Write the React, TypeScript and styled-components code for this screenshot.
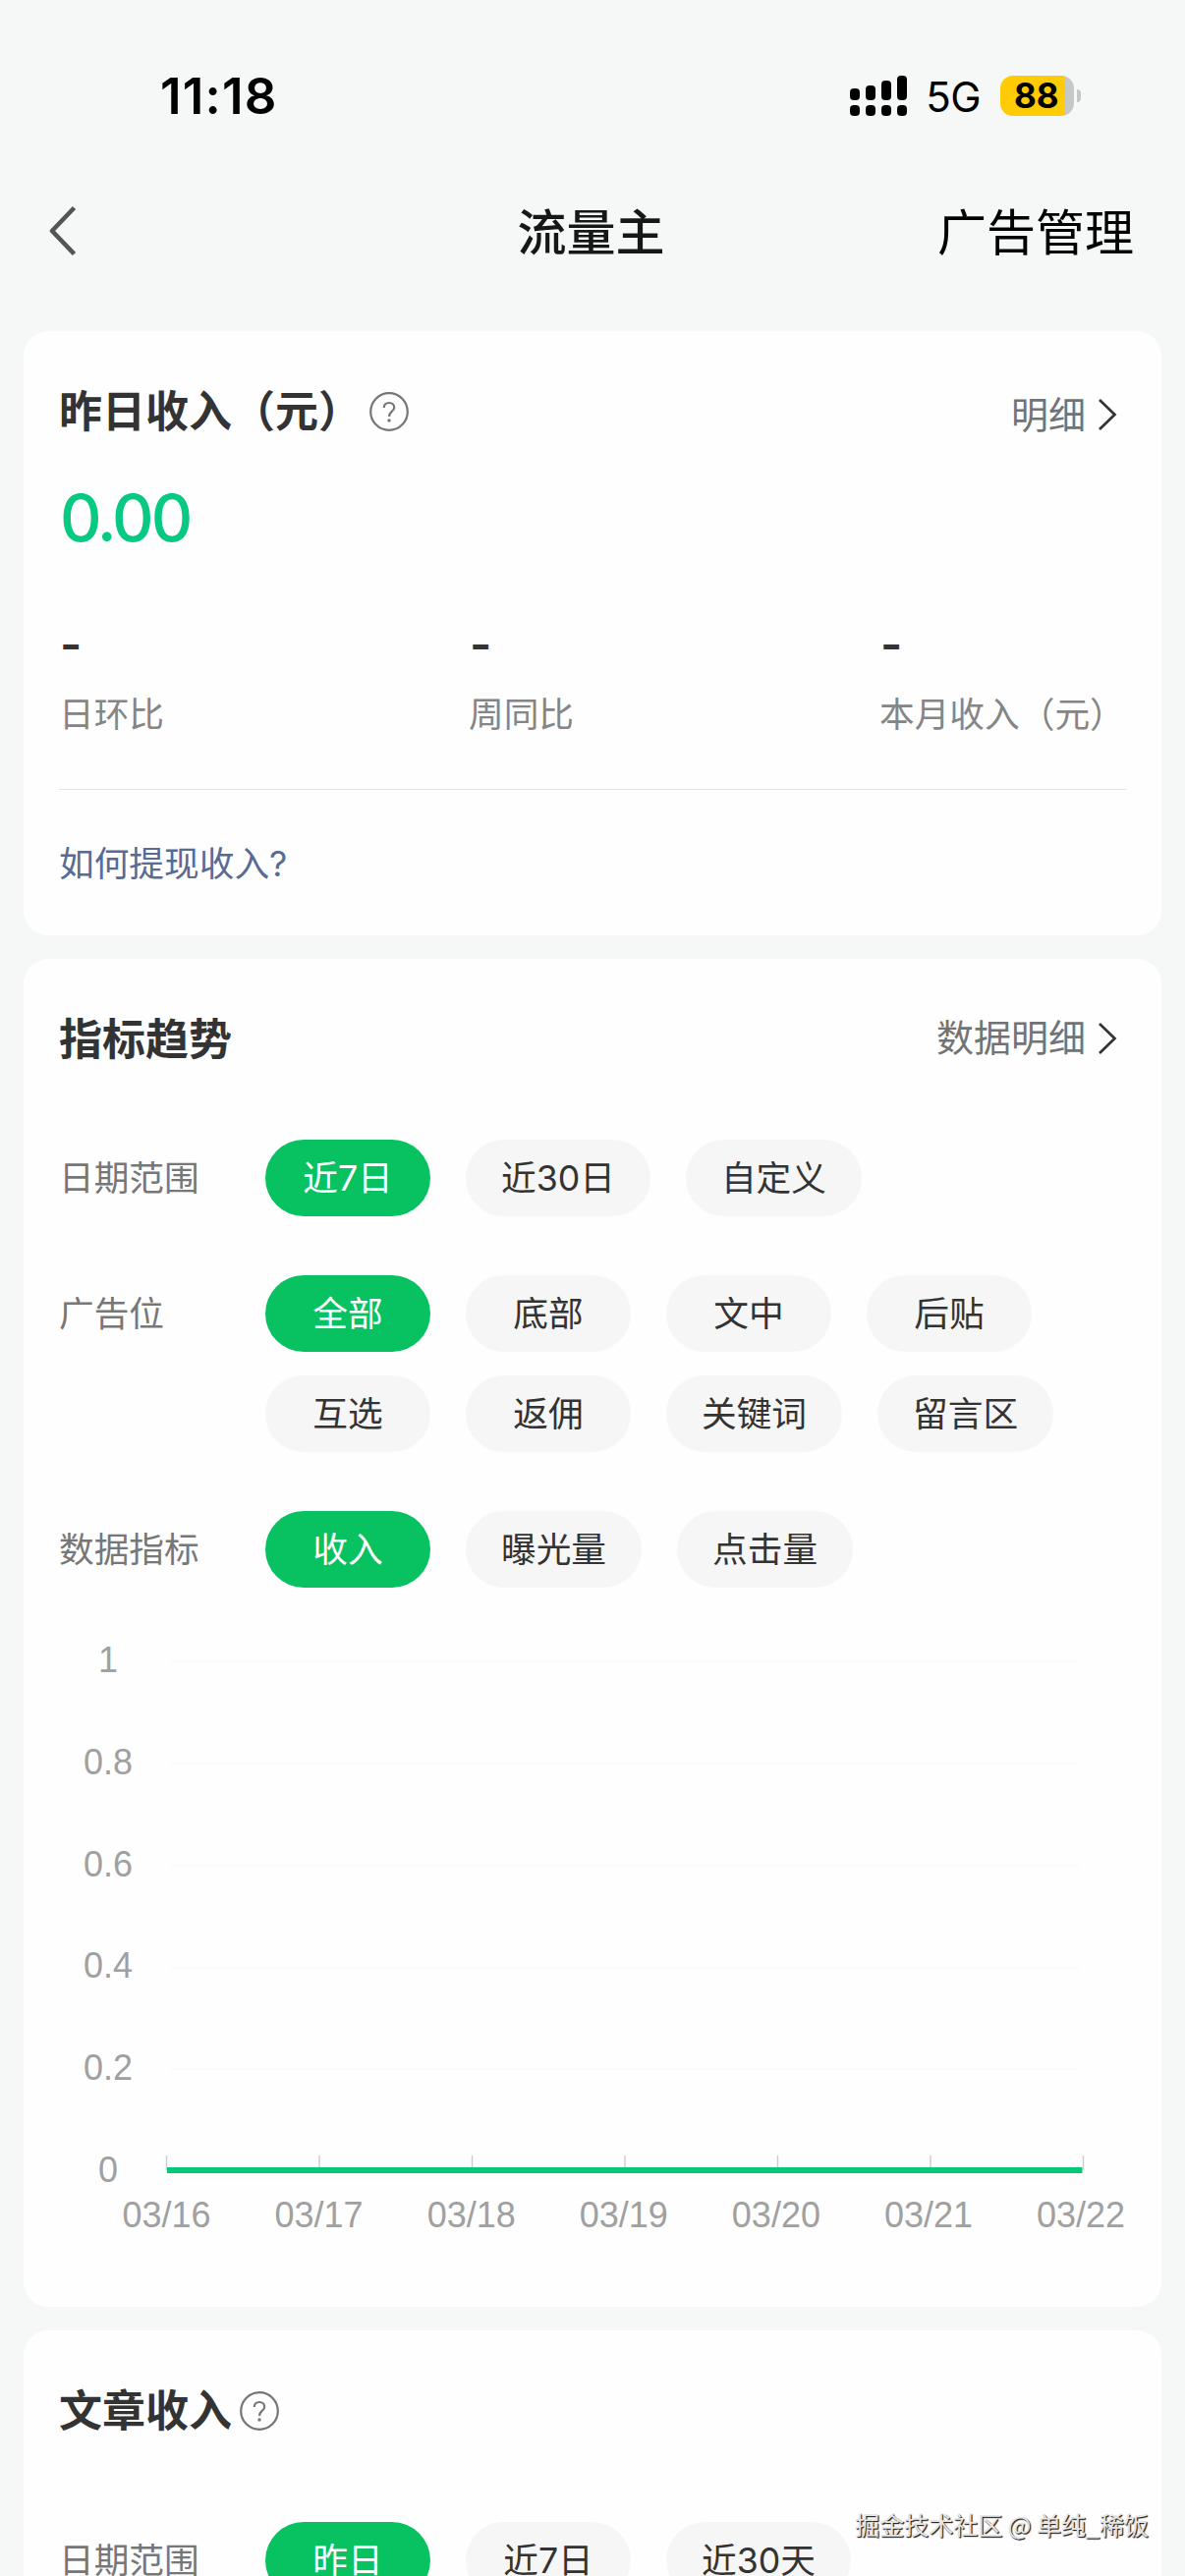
import React from "react";
import styled, { createGlobalStyle } from "styled-components";

const GlobalStyle = createGlobalStyle`
  * { box-sizing: border-box; }
  html, body { margin: 0; padding: 0; background: #f5f8f7; }
  body { font-family: Inter, "Noto Sans CJK SC", sans-serif; color: #333; overflow: hidden; }
  button { font: inherit; border: 0; padding: 0; background: none; color: inherit; }
  svg { display: block; flex: none; }
`;

const Screen = styled.div`
  position: relative;
  width: 1206px;
  height: 2622px;
  overflow: hidden;
  background: #f5f8f7;
  display: flex;
  flex-direction: column;
`;

const StatusBar = styled.header`
  flex: none;
  height: 152px;
  padding: 43px 106px 0 163px;
  display: flex;
  align-items: center;
  justify-content: space-between;
  color: #000;
`;

const Clock = styled.time`
  font-size: 51px;
  font-weight: 600;
  line-height: 60px;
  letter-spacing: 1.2px;
`;

const StatusIcons = styled.div`
  display: flex;
  align-items: center;
`;

const Network = styled.span`
  font-size: 42px;
  line-height: 50px;
  letter-spacing: -0.5px;
  margin: 3px 20px 0 19px;
`;

const Battery = styled.div`
  width: 75px;
  height: 41px;
  border-radius: 13px;
  background: linear-gradient(90deg, #fecb04 0 66.5px, #c6c8c8 66.5px);
  font-size: 35px;
  font-weight: 700;
  line-height: 41px;
  padding-left: 14px;
`;

const BatteryCap = styled.i`
  width: 4px;
  height: 13px;
  margin-left: 3px;
  border-radius: 0 4px 4px 0;
  background: #c6c8c8;
`;

const NavBar = styled.nav`
  flex: none;
  height: 185px;
  padding: 0 52px 19px 49px;
  display: grid;
  grid-template-columns: 1fr auto 1fr;
  align-items: center;
`;

const NavTitle = styled.h1`
  margin: 4px 0 0;
  font-size: 50px;
  font-weight: 500;
  line-height: 72px;
  color: #161818;
`;

const NavAction = styled.button`
  justify-self: end;
  margin-top: 4px;
  font-size: 50px;
  line-height: 72px;
  color: #000;
`;

const Cards = styled.main`
  padding: 0 24px;
  display: flex;
  flex-direction: column;
  gap: 24px;
`;

const Card = styled.section<{ $height: number }>`
  flex: none;
  height: ${(p) => p.$height}px;
  padding: 48px 36px 0;
  border-radius: 25px;
  background: #fefefe;
`;

const CardHead = styled.div`
  height: 66px;
  display: flex;
  align-items: center;
`;

const CardTitle = styled.h2`
  margin: 2px 0 0;
  font-size: 44px;
  font-weight: 700;
  line-height: 66px;
`;

const HelpButton = styled.button`
  margin: 1px 0 0 8px;
`;

const DetailLink = styled.button<{ $drop: number }>`
  margin: ${(p) => p.$drop}px 9px 0 auto;
  display: flex;
  align-items: center;
  gap: 12px;
  font-size: 38px;
  line-height: 57px;
  color: #737373;
`;

const Amount = styled.p`
  margin: 38px 0 0 1px;
  font-size: 66px;
  font-weight: 500;
  line-height: 76px;
  letter-spacing: -3px;
  color: #07c981;
`;

const Stats = styled.dl`
  margin: 61px 0 0;
  display: grid;
  grid-template-columns: 417px 418px 251px;
`;

const Stat = styled.div`
  display: flex;
  flex-direction: column-reverse;
`;

const StatLabel = styled.dt`
  margin-top: 15px;
  font-size: 35.7px;
  line-height: 52px;
  white-space: nowrap;
  color: #858585;
`;

const StatValue = styled.dd`
  margin: 0 0 0 1px;
  font-size: 48px;
  font-weight: 600;
  line-height: 60px;
`;

const Divider = styled.hr`
  width: 1086px;
  height: 1px;
  margin: 50px 0 0;
  border: 0;
  background: #e4e4e4;
`;

const HelpLink = styled.a`
  display: block;
  margin: 49px 0 0;
  font-size: 35.7px;
  line-height: 52px;
  color: #576b95;
`;

const Filters = styled.div<{ $gap: number }>`
  margin-top: ${(p) => p.$gap}px;
  display: flex;
  flex-direction: column;
  gap: 60px;
`;

const FilterRow = styled.div`
  display: flex;
`;

const FilterLabel = styled.span`
  flex: none;
  width: 210px;
  font-size: 35.7px;
  line-height: 78px;
  color: #777;
`;

const Chips = styled.div`
  display: flex;
  flex-wrap: wrap;
  gap: 24px 36px;
`;

const Chip = styled.button<{ $active?: boolean }>`
  min-width: 168px;
  height: 78px;
  padding: 0 36px;
  border-radius: 39px;
  font-size: 35.7px;
  line-height: 78px;
  text-align: center;
  white-space: nowrap;
  color: ${(p) => (p.$active ? "#fff" : "#333")};
  background: ${(p) => (p.$active ? "#08c261" : "#f6f6f6")};
`;

const Chart = styled.svg`
  margin: 24px 0 0 -36px;
  font-family: "Liberation Sans", Arial, sans-serif;
  font-size: 36px;
`;

const Watermark = styled.div`
  position: absolute;
  right: 37px;
  bottom: 35px;
  font-size: 25px;
  line-height: 36px;
  font-family: "Noto Sans CJK SC", sans-serif;
  color: #e6e6e6;
  text-shadow: 1px 1px 1px #222, 1px 1px 1px #555;
  white-space: nowrap;
`;

const SignalIcon = () => (
  <svg width="58" height="41" viewBox="0 0 58 41">
    {[13, 10, 5, 0].map((top, i) => (
      <g key={i}>
        <rect x={i * 16} y={top} width="10" height={25 - top} rx="4" />
        <rect x={i * 16} y="30" width="10" height="11" rx="4" />
      </g>
    ))}
  </svg>
);

const BackIcon = () => (
  <svg width="30" height="52" viewBox="0 0 30 52" fill="none" stroke="#555" strokeWidth="4.6">
    <path d="M26.5 2.5 4 26l22.5 23.5" strokeLinejoin="round" />
  </svg>
);

const ArrowIcon = () => (
  <svg width="20" height="32" viewBox="0 0 20 32" fill="none" stroke="#333" strokeWidth="2.7">
    <path d="M2 1 17.5 16 2 31" />
  </svg>
);

const HelpIcon = () => (
  <svg width="40" height="40" viewBox="0 0 40 40" fill="none" stroke="#757575" strokeWidth="2.2">
    <circle cx="20" cy="20" r="18.8" />
    <path d="M14.800 16c0-3 2.200-5 5.200-5s5.200 2 5.200 4.700c0 2-1 3-2.500 4.200-1.900 1.500-2.600 2.400-2.600 5" />
    <circle cx="20" cy="29" r="1.7" fill="#757575" stroke="none" />
  </svg>
);

const DAYS = ["03/16", "03/17", "03/18", "03/19", "03/20", "03/21", "03/22"];
const LEVELS = ["1", "0.8", "0.6", "0.4", "0.2", "0"];
const PLOT = { left: 145.5, top: 50, stepX: 155.5, labelStep: 155.1, stepY: 103.8 };

const TrendChart = () => {
  const right = PLOT.left + PLOT.stepX * 6;
  const base = PLOT.top + PLOT.stepY * 5;
  return (
    <Chart width="1158" height="660" viewBox="0 0 1158 660">
      {LEVELS.map((level, i) => {
        const y = PLOT.top + PLOT.stepY * i;
        return (
          <g key={level}>
            {i < 5 && (
              <line x1={PLOT.left + 4} x2={right - 4} y1={y + 1} y2={y + 1} stroke="#fafafa" strokeWidth="2" />
            )}
            <text x="86" y={y + 12} fill="#a0a0a0" textAnchor="middle">
              {level}
            </text>
          </g>
        );
      })}
      {DAYS.map((day, i) => {
        const x = PLOT.left + PLOT.stepX * i;
        return (
          <g key={day}>
            <line x1={x} x2={x} y1={base - 15} y2={base} stroke="#ccc" strokeWidth="1.4" />
            <text x={PLOT.left + PLOT.labelStep * i} y={base + 57.5} fill="#a0a0a0" textAnchor="middle">
              {day}
            </text>
          </g>
        );
      })}
      <line x1={PLOT.left + 0.5} x2={right - 1} y1={base} y2={base} stroke="#05c977" strokeWidth="6" />
    </Chart>
  );
};

const FilterGroup = ({ label, options }: { label: string; options: string[] }) => (
  <FilterRow>
    <FilterLabel>{label}</FilterLabel>
    <Chips>
      {options.map((option, i) => (
        <Chip key={option} $active={i === 0}>
          {option}
        </Chip>
      ))}
    </Chips>
  </FilterRow>
);

export default function App() {
  return (
    <Screen>
      <GlobalStyle />
      <StatusBar>
        <Clock>11:18</Clock>
        <StatusIcons>
          <SignalIcon />
          <Network>5G</Network>
          <Battery>88</Battery>
          <BatteryCap />
        </StatusIcons>
      </StatusBar>
      <NavBar>
        <BackIcon />
        <NavTitle>流量主</NavTitle>
        <NavAction>广告管理</NavAction>
      </NavBar>
      <Cards>
        <Card $height={615}>
          <CardHead>
            <CardTitle>昨日收入（元）</CardTitle>
            <HelpButton aria-label="help">
              <HelpIcon />
            </HelpButton>
            <DetailLink $drop={8}>
              明细
              <ArrowIcon />
            </DetailLink>
          </CardHead>
          <Amount>0.00</Amount>
          <Stats>
            {["日环比", "周同比", "本月收入（元）"].map((label) => (
              <Stat key={label}>
                <StatLabel>{label}</StatLabel>
                <StatValue>-</StatValue>
              </Stat>
            ))}
          </Stats>
          <Divider />
          <HelpLink>如何提现收入?</HelpLink>
        </Card>
        <Card $height={1372}>
          <CardHead>
            <CardTitle>指标趋势</CardTitle>
            <DetailLink $drop={-1}>
              数据明细
              <ArrowIcon />
            </DetailLink>
          </CardHead>
          <Filters $gap={70}>
            <FilterGroup label="日期范围" options={["近7日", "近30日", "自定义"]} />
            <FilterGroup
              label="广告位"
              options={["全部", "底部", "文中", "后贴", "互选", "返佣", "关键词", "留言区"]}
            />
            <FilterGroup label="数据指标" options={["收入", "曝光量", "点击量"]} />
          </Filters>
          <TrendChart />
        </Card>
        <Card $height={500}>
          <CardHead>
            <CardTitle>文章收入</CardTitle>
            <HelpButton aria-label="help">
              <HelpIcon />
            </HelpButton>
          </CardHead>
          <Filters $gap={81}>
            <FilterGroup label="日期范围" options={["昨日", "近7日", "近30天"]} />
          </Filters>
        </Card>
      </Cards>
      <Watermark>掘金技术社区 @ 单纯_稀饭</Watermark>
    </Screen>
  );
}
